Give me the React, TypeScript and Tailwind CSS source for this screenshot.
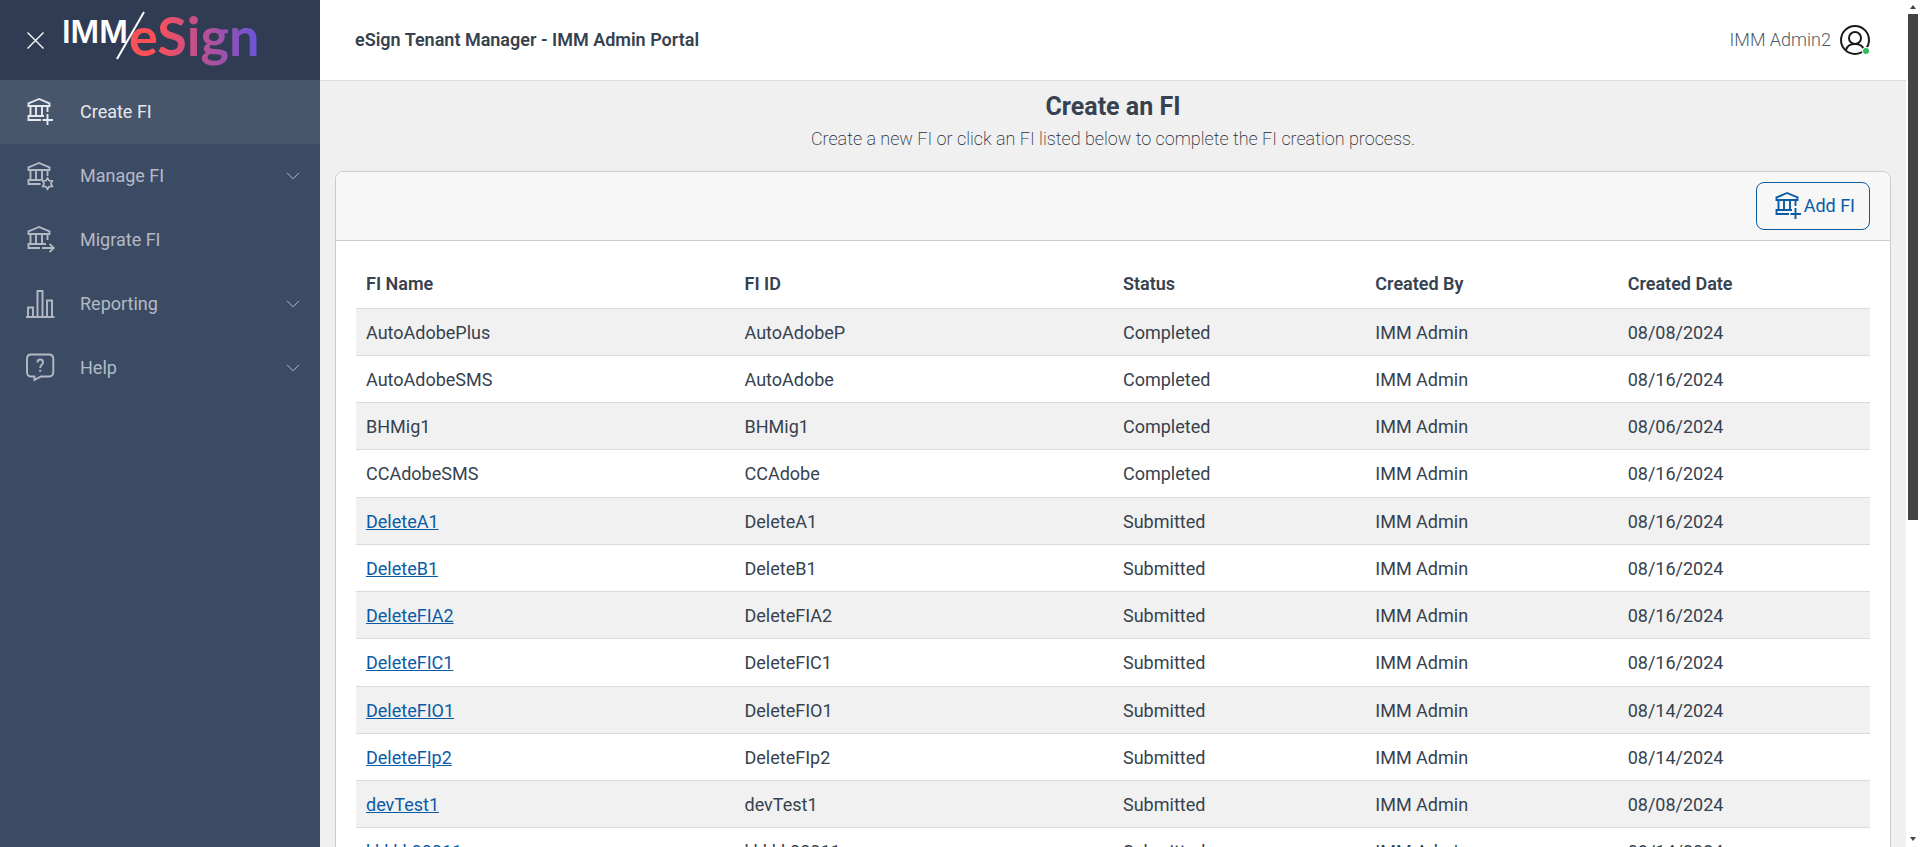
import type { ReactNode } from 'react';

type FI = {
  name: string;
  id: string;
  status: 'Completed' | 'Submitted';
  createdBy: string;
  createdDate: string;
};

const rows: FI[] = [
  { name: 'AutoAdobePlus', id: 'AutoAdobeP', status: 'Completed', createdBy: 'IMM Admin', createdDate: '08/08/2024' },
  { name: 'AutoAdobeSMS', id: 'AutoAdobe', status: 'Completed', createdBy: 'IMM Admin', createdDate: '08/16/2024' },
  { name: 'BHMig1', id: 'BHMig1', status: 'Completed', createdBy: 'IMM Admin', createdDate: '08/06/2024' },
  { name: 'CCAdobeSMS', id: 'CCAdobe', status: 'Completed', createdBy: 'IMM Admin', createdDate: '08/16/2024' },
  { name: 'DeleteA1', id: 'DeleteA1', status: 'Submitted', createdBy: 'IMM Admin', createdDate: '08/16/2024' },
  { name: 'DeleteB1', id: 'DeleteB1', status: 'Submitted', createdBy: 'IMM Admin', createdDate: '08/16/2024' },
  { name: 'DeleteFIA2', id: 'DeleteFIA2', status: 'Submitted', createdBy: 'IMM Admin', createdDate: '08/16/2024' },
  { name: 'DeleteFIC1', id: 'DeleteFIC1', status: 'Submitted', createdBy: 'IMM Admin', createdDate: '08/16/2024' },
  { name: 'DeleteFIO1', id: 'DeleteFIO1', status: 'Submitted', createdBy: 'IMM Admin', createdDate: '08/14/2024' },
  { name: 'DeleteFIp2', id: 'DeleteFIp2', status: 'Submitted', createdBy: 'IMM Admin', createdDate: '08/14/2024' },
  { name: 'devTest1', id: 'devTest1', status: 'Submitted', createdBy: 'IMM Admin', createdDate: '08/08/2024' },
  { name: 'kkkkk00011', id: 'kkkkk00011', status: 'Submitted', createdBy: 'IMM Admin', createdDate: '08/14/2024' },
];

function BankIcon({ badge }: { badge: 'plus' | 'gear' | 'arrow' }) {
  return (
    <svg width="30" height="30" viewBox="0 0 30 30" fill="none" stroke="currentColor" strokeWidth="1.9" aria-hidden="true">
      <path d="M13 2 L2.500 6.500 V9 H23.500 V6.500 Z" />
      <path d="M4.500 9 V19 M10 9 V19 M16 9 V19" />
      <path d="M21.500 9 V15" />
      {badge === 'plus' && (
        <>
          <path d="M18 19 H2.500 V23 H15" />
          <path d="M21.500 17 V28 M16.500 23 H27" />
        </>
      )}
      {badge === 'gear' && (
        <>
          <path d="M15.500 19 H2.500 V23 H14.500" />
          <path
            strokeWidth="1.700"
            strokeLinejoin="round"
            d="M21.500 16.800 L23 19.600 L26.500 19.800 L24.800 22.600 L26.500 25.400 L23 25.600 L21.500 28.400 L20 25.600 L16.500 25.400 L18.200 22.600 L16.500 19.800 L20 19.600 Z"
          />
        </>
      )}
      {badge === 'arrow' && (
        <>
          <path d="M20 19 H2.500 V23 H14" />
          <path d="M16 23 H27.500 M23.500 18.800 L27.700 23 L23.500 27.200" />
        </>
      )}
    </svg>
  );
}

function ChartIcon() {
  return (
    <svg width="30" height="30" viewBox="0 0 30 30" fill="none" stroke="currentColor" strokeWidth="1.9" aria-hidden="true">
      <path d="M0 28 H28.500" />
      <path d="M2 28 V18.500 H7 V28 M11.500 28 V2 H16.500 V28 M21 28 V11.500 H26 V28" />
    </svg>
  );
}

function HelpIcon() {
  return (
    <svg width="30" height="30" viewBox="0 0 30 30" fill="none" stroke="currentColor" strokeWidth="1.9" aria-hidden="true">
      <path d="M5 1.500 H23 Q27.300 1.500 27.300 6 V19 Q27.300 23.500 23 23.500 H15 L8.500 27 V23.500 H5 Q1 23.500 1 19 V6 Q1 1.500 5 1.500 Z" />
      <path d="M11.500 9.500 Q11.500 6.500 14.200 6.500 Q17 6.500 17 9.300 Q17 11 15.500 12 Q14.200 13 14.200 15" />
      <path d="M14.200 16.800 V18.800" strokeWidth="2" />
    </svg>
  );
}

function Logo() {
  return (
    <svg width="200" height="80" viewBox="0 0 200 80" role="img" aria-label="IMM/eSign">
      <defs>
        <linearGradient id="esign" gradientUnits="userSpaceOnUse" x1="72" y1="0" x2="196" y2="0">
          <stop offset="0.18" stopColor="#ff5055" />
          <stop offset="0.55" stopColor="#bd5090" />
          <stop offset="1" stopColor="#6c54d8" />
        </linearGradient>
      </defs>
      <text x="2" y="43" fill="#fff" fontFamily="Inter, sans-serif" fontWeight="600" fontSize="31">IMM</text>
      <text x="69" y="56" fill="url(#esign)" fontFamily="Lato, sans-serif" fontWeight="700" fontSize="54">eSign</text>
      <path d="M84 12 L57 59" stroke="#fff" strokeWidth="2" />
    </svg>
  );
}

function UserIcon() {
  return (
    <svg width="32" height="32" viewBox="0 0 32 32" fill="none" stroke="#1a1a1a" strokeWidth="2" aria-hidden="true">
      <circle cx="16" cy="16" r="14" />
      <circle cx="16" cy="14" r="6" />
      <path d="M7 26 Q8.500 20 16 20 Q23.500 20 25 26" />
      <circle cx="27" cy="27" r="4" fill="#fff" stroke="none" />
      <circle cx="27" cy="27" r="3" fill="#2dbd5a" stroke="none" />
    </svg>
  );
}

function NavItem({ icon, label, active, expandable }: { icon: ReactNode; label: string; active?: boolean; expandable?: boolean }) {
  return (
    <li>
      <a
        href="#"
        className={`flex h-16 items-center pl-[26px] pr-5 text-lg ${active ? 'bg-[#48566c] text-[#e6e9ed]' : 'text-[#b4bac4]'}`}
      >
        {icon}
        <span className="ml-6 flex-1">{label}</span>
        {expandable && (
          <svg width="14" height="8" viewBox="0 0 14 8" fill="none" stroke="currentColor" aria-hidden="true">
            <path d="M1 .8 L7 6.800 L13 .8" />
          </svg>
        )}
      </a>
    </li>
  );
}

export default function App() {
  return (
    <div className="flex h-screen overflow-hidden bg-white font-[Roboto,sans-serif] text-lg text-[#36424f]">
      <aside className="w-80 shrink-0 bg-[#3c4b64]">
        <div className="flex h-20 items-center bg-[#303c54] pl-[27px]">
          <button type="button" aria-label="Close menu" className="mr-4 text-white">
            <svg width="17" height="17" viewBox="0 0 17 17" fill="none" stroke="currentColor" strokeWidth="1.300">
              <path d="M.5 .5 L16.500 16.500 M16.500 .5 L.5 16.500" />
            </svg>
          </button>
          <Logo />
        </div>
        <nav>
          <ul>
            <NavItem icon={<BankIcon badge="plus" />} label="Create FI" active />
            <NavItem icon={<BankIcon badge="gear" />} label="Manage FI" expandable />
            <NavItem icon={<BankIcon badge="arrow" />} label="Migrate FI" />
            <NavItem icon={<ChartIcon />} label="Reporting" expandable />
            <NavItem icon={<HelpIcon />} label="Help" expandable />
          </ul>
        </nav>
      </aside>

      <div className="flex min-w-0 flex-1 flex-col bg-[#f0f0f0]">
        <header className="flex shrink-0 items-center justify-between border-b border-[#d8dbe0] bg-white px-[35px]">
          <h1 className="font-semibold leading-[80px]">eSign Tenant Manager - IMM Admin Portal</h1>
          <button type="button" className="flex items-center gap-2 font-light text-[#4f5b66]">
            IMM Admin2
            <UserIcon />
          </button>
        </header>

        <main className="flex-1 overflow-hidden px-[15px] pt-2">
          <h2 className="text-center text-[25px] font-bold leading-9">Create an FI</h2>
          <p className="text-center font-extralight leading-7 text-[#1f2a36]">
            Create a new FI or click an FI listed below to complete the FI creation process.
          </p>

          <section className="mt-[18px] overflow-hidden rounded-lg border border-[#c8cbd0] bg-white">
            <div className="flex justify-end border-b border-[#c8cbd0] bg-[#f7f7f7] px-5 py-[10px]">
              <button type="button" className="flex h-12 items-center rounded-lg border border-[#0a5ba6] pl-[17px] pr-[14px] text-[#0a5ba6]">
                <BankIcon badge="plus" />
                Add FI
              </button>
            </div>
            <div className="px-5 pt-5">
              <table className="w-full table-fixed text-left">
                <thead>
                  <tr className="h-[47px]">
                    <th className="w-3/12 px-[10px] font-semibold">FI Name</th>
                    <th className="w-3/12 px-[10px] font-semibold">FI ID</th>
                    <th className="w-2/12 px-[10px] font-semibold">Status</th>
                    <th className="w-2/12 px-[10px] font-semibold">Created By</th>
                    <th className="w-2/12 px-[10px] font-semibold">Created Date</th>
                  </tr>
                </thead>
                <tbody>
                  {rows.map((fi) => (
                    <tr key={fi.id} className="h-[47px] border-t border-[#d8dbe0] odd:bg-[#f1f1f1] nth-[4n]:h-12">
                      <td className="px-[10px] pt-0.5">
                        {fi.status === 'Submitted' ? (
                          <a href="#" className="text-[#0a5ba6] underline">{fi.name}</a>
                        ) : (
                          fi.name
                        )}
                      </td>
                      <td className="px-[10px] pt-0.5">{fi.id}</td>
                      <td className="px-[10px] pt-0.5">{fi.status}</td>
                      <td className="px-[10px] pt-0.5">{fi.createdBy}</td>
                      <td className="px-[10px] pt-0.5">{fi.createdDate}</td>
                    </tr>
                  ))}
                </tbody>
              </table>
            </div>
          </section>
        </main>
      </div>

      {/* scroll rail */}
      <div className="flex w-[14px] shrink-0 flex-col items-center justify-between bg-white pb-1 pt-1" aria-hidden="true">
        <div className="flex h-[516px] w-full flex-col items-center">
          <svg width="6" height="10" viewBox="0 0 6 10" fill="#444">
            <path d="M0 5 L3 1 L6 5 Z" />
          </svg>
          <div className="w-[10px] flex-1 bg-[#444]" />
        </div>
        <svg width="6" height="6" viewBox="0 0 6 6" fill="#444">
          <path d="M0 0 H6 L3 4 Z" />
        </svg>
      </div>
    </div>
  );
}
